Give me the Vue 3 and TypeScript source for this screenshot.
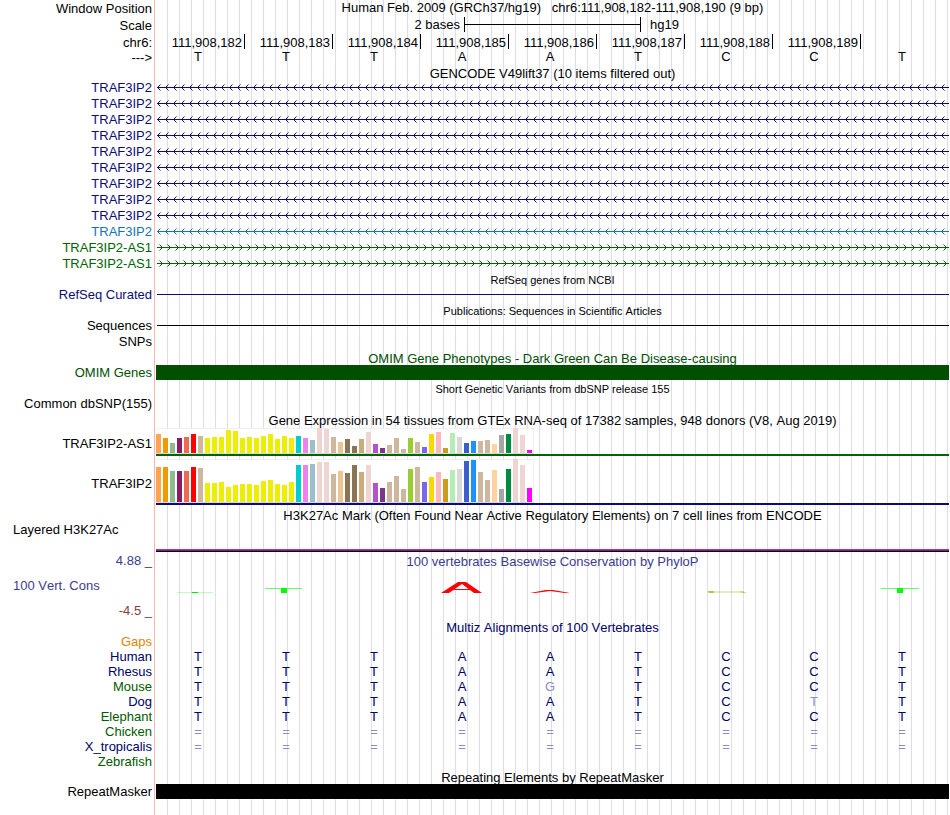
<script setup lang="ts">
type Tone = 'navy' | 'blue' | 'green'

interface GeneRow {
  name: string
  tone: Tone
  strand: '-' | '+'
}

interface Species {
  name: string
  tone: 'species-navy' | 'species-green'
  bases: string
  faded?: number
}

const heading = ['Human Feb. 2009 (GRCh37/hg19)', 'chr6:111,908,182-111,908,190 (9 bp)'].join('   ')

const positions: string[] = [
  '111,908,182', '111,908,183', '111,908,184', '111,908,185',
  '111,908,186', '111,908,187', '111,908,188', '111,908,189', '',
]
const sequence: string[] = 'TTTAATCCT'.split('')

const genes: GeneRow[] = [
  ...Array.from({ length: 9 }, (): GeneRow => ({ name: 'TRAF3IP2', tone: 'navy', strand: '-' })),
  { name: 'TRAF3IP2', tone: 'blue', strand: '-' },
  { name: 'TRAF3IP2-AS1', tone: 'green', strand: '+' },
  { name: 'TRAF3IP2-AS1', tone: 'green', strand: '+' },
]

const tissueColors: string[] = [
  '#ffa54f', '#ee9a00', '#8fbc8f', '#8b1c62', '#ee6a50', '#ff0000', '#cdb79e',
  ...Array.from({ length: 13 }, () => '#eeee00'),
  '#00cdcd', '#ee82ee', '#9ac0cd', '#eed5d2', '#eed5d2', '#cdb79e', '#eec591',
  '#8b7355', '#8b7355', '#cdaa7d', '#eed5d2', '#b452cd', '#7a378b', '#cdb79e',
  '#cdb79e', '#cdb79e', '#9acd32', '#cdb79e', '#7a67ee', '#ffd700', '#ffb6c1',
  '#cd9b1d', '#b4eeb4', '#d9d9d9', '#3a5fcd', '#1e90ff', '#cdb79e', '#cdb79e',
  '#ffd39b', '#a6a6a6', '#008b45', '#eed5d2', '#eed5d2', '#ff00ff',
]

const expression = [
  {
    name: 'TRAF3IP2-AS1',
    kind: 'antisense',
    levels: [
      19, 15, 10, 15, 16, 19, 17, 15, 16, 16, 23, 22, 15, 16, 15, 17, 19, 14, 17, 15, 17, 15, 13, 25, 24, 16, 11, 14,
      7, 14, 21, 9, 5, 8, 15, 4, 15, 11, 6, 19, 21, 5, 20, 16, 10, 12, 12, 13, 9, 18, 19, 25, 18, 3,
    ],
  },
  {
    name: 'TRAF3IP2',
    kind: 'coding',
    levels: [
      35, 35, 31, 31, 31, 35, 34, 19, 19, 20, 15, 17, 18, 18, 17, 21, 22, 18, 17, 20, 37, 37, 38, 40, 40, 28, 31, 29,
      37, 30, 37, 19, 14, 20, 26, 13, 33, 35, 20, 25, 30, 23, 32, 33, 41, 42, 30, 22, 32, 13, 33, 43, 37, 14,
    ],
  },
]

const species: Species[] = [
  { name: 'Human', tone: 'species-navy', bases: 'TTTAATCCT' },
  { name: 'Rhesus', tone: 'species-navy', bases: 'TTTAATCCT' },
  { name: 'Mouse', tone: 'species-green', bases: 'TTTAGTCCT', faded: 4 },
  { name: 'Dog', tone: 'species-navy', bases: 'TTTAATCTT', faded: 7 },
  { name: 'Elephant', tone: 'species-green', bases: 'TTTAATCCT' },
  { name: 'Chicken', tone: 'species-green', bases: '=========' },
  { name: 'X_tropicalis', tone: 'species-navy', bases: '=========' },
  { name: 'Zebrafish', tone: 'species-green', bases: '         ' },
]
</script>

<template>
  <main class="browser">
    <section>
      <div class="row window-row">
        <span class="label">Window Position</span>
        <h1 class="title">{{ heading }}</h1>
      </div>
      <div class="row scale-row">
        <span class="label">Scale</span>
        <div class="scale">
          <span class="scale-size">2 bases</span>
          <span class="scale-bar"></span>
          <span class="scale-assembly">hg19</span>
        </div>
      </div>
      <div class="row ruler-row">
        <span class="label">chr6:</span>
        <div class="bases">
          <span v-for="(p, i) in positions" :key="i" class="position" :class="{ tick: p }">{{ p }}</span>
        </div>
      </div>
      <div class="row sequence-row">
        <span class="label">---&gt;</span>
        <div class="bases">
          <span v-for="(b, i) in sequence" :key="i" class="base">{{ b }}</span>
        </div>
      </div>
    </section>

    <section>
      <h2 class="track-title low">GENCODE V49lift37 (10 items filtered out)</h2>
      <div v-for="(g, i) in genes" :key="i" class="row" :class="g.tone">
        <span class="label">{{ g.name }}</span>
        <svg class="intron" aria-hidden="true">
          <defs>
            <pattern :id="`strand-${i}`" width="8" height="16" patternUnits="userSpaceOnUse">
              <path v-if="g.strand === '-'" class="chevron" d="M4.5 4.5L1.5 7.5L4.5 10.5" />
              <path v-else class="chevron" d="M3.5 4.5L6.5 7.5L3.5 10.5" />
            </pattern>
          </defs>
          <rect x="1" y="7" width="100%" height="1" fill="currentColor" />
          <rect width="100%" height="16" :fill="`url(#strand-${i})`" />
        </svg>
      </div>
    </section>

    <section>
      <h2 class="track-title small">RefSeq genes from NCBI</h2>
      <div class="row navy">
        <span class="label">RefSeq Curated</span>
        <span class="line"></span>
      </div>
    </section>

    <section>
      <h2 class="track-title small">Publications: Sequences in Scientific Articles</h2>
      <div class="row">
        <span class="label">Sequences</span>
        <span class="line"></span>
      </div>
      <div class="row">
        <span class="label">SNPs</span>
      </div>
    </section>

    <section class="omim">
      <h2 class="track-title">OMIM Gene Phenotypes - Dark Green Can Be Disease-causing</h2>
      <div class="row compact">
        <span class="label">OMIM Genes</span>
        <span class="block"></span>
      </div>
    </section>

    <section>
      <h2 class="track-title small tall">Short Genetic Variants from dbSNP release 155</h2>
      <div class="row">
        <span class="label">Common dbSNP(155)</span>
      </div>
    </section>

    <section>
      <h2 class="track-title tall">Gene Expression in 54 tissues from GTEx RNA-seq of 17382 samples, 948 donors (V8, Aug 2019)</h2>
      <div v-for="e in expression" :key="e.name" class="row expression" :class="e.kind">
        <span class="label">{{ e.name }}</span>
        <div class="gene-model">
          <div class="bars">
            <span
              v-for="(level, i) in e.levels"
              :key="i"
              class="bar"
              :style="{ height: `${level}px`, background: tissueColors[i] }"
            ></span>
          </div>
        </div>
      </div>
    </section>

    <section>
      <h2 class="track-title short">H3K27Ac Mark (Often Found Near Active Regulatory Elements) on 7 cell lines from ENCODE</h2>
      <div class="row histone">
        <span class="label side">Layered H3K27Ac</span>
        <span class="histone-signal"></span>
      </div>
    </section>

    <section class="phylop">
      <div class="row window-row">
        <span class="label">4.88 _</span>
        <h2 class="title phylop-title">100 vertebrates Basewise Conservation by PhyloP</h2>
      </div>
      <div class="row signal">
        <span class="label side">100 Vert. Cons</span>
        <div class="bases">
          <svg viewBox="0 0 88 35">
            <path d="M20 24.5H56" stroke="#00ff00" stroke-opacity=".25" />
            <rect x="35" y="24" width="6" height="1" fill="#00e600" />
          </svg>
          <svg viewBox="0 0 88 35">
            <path d="M20 20.5H57" stroke="#66ff66" />
            <rect x="36" y="20" width="6" height="5" fill="#00ff00" />
          </svg>
          <svg viewBox="0 0 88 35"></svg>
          <svg viewBox="0 0 88 35">
            <path d="M20 25L37 14H45L61 25H53L41 16L28 25Z" fill="#ff0000" />
            <path d="M31 21.5H50" stroke="#ff0000" />
          </svg>
          <svg viewBox="0 0 88 35">
            <path d="M21 25L37 22H44L61 25H56L41 23L26 25Z" fill="#ff0000" />
          </svg>
          <svg viewBox="0 0 88 35"></svg>
          <svg viewBox="0 0 88 35">
            <rect x="23" y="23" width="36" height="2" fill="#b5b533" fill-opacity=".3" />
            <path d="M23 23H29V25H24Z" fill="#b5b533" fill-opacity=".8" />
            <path d="M55 23L62 24.5L57 25Z" fill="#b5b533" fill-opacity=".8" />
          </svg>
          <svg viewBox="0 0 88 35"></svg>
          <svg viewBox="0 0 88 35">
            <path d="M20 20.5H58" stroke="#66ff66" />
            <rect x="36" y="20" width="6" height="5" fill="#00ff00" />
          </svg>
        </div>
      </div>
      <div class="row compact">
        <span class="label minimum">-4.5 _</span>
      </div>
    </section>

    <section class="multiz">
      <h2 class="track-title low">Multiz Alignments of 100 Vertebrates</h2>
      <table class="alignment">
        <tbody>
          <tr>
            <th scope="row" class="gaps">Gaps</th>
            <td v-for="i in 9" :key="i"></td>
          </tr>
          <tr v-for="s in species" :key="s.name">
            <th scope="row" :class="s.tone">{{ s.name }}</th>
            <td v-for="(b, i) in s.bases.split('')" :key="i" :class="{ faded: b === '=' || s.faded === i }">{{ b }}</td>
          </tr>
        </tbody>
      </table>
    </section>

    <section>
      <h2 class="track-title">Repeating Elements by RepeatMasker</h2>
      <div class="row compact">
        <span class="label">RepeatMasker</span>
        <span class="block"></span>
      </div>
    </section>
  </main>
</template>

<style>
body {
  margin: 0;
  background: #fff;
}
</style>

<style scoped>
.browser {
  box-sizing: border-box;
  min-height: 100vh;
  padding-right: 1px;
  color: #000;
  font: 13px/16px "Liberation Sans", Arial, Helvetica, sans-serif;
  font-kerning: none;
  background:
    linear-gradient(#ffb4b4, #ffb4b4) 154px 0 / 1px 100% no-repeat,
    repeating-linear-gradient(to right, transparent 0 11px, #dcdcf8 11px 12px) 156px 0 / 100% 100% no-repeat,
    #fff;
}

.row {
  display: grid;
  grid-template-columns: 152px minmax(0, 1fr);
  column-gap: 4px;
  min-height: 16px;
}

.compact {
  min-height: 15px;
  line-height: 15px;
}

.window-row {
  height: 16px;
  line-height: 18px;
}

.sequence-row {
  height: 15px;
  min-height: 15px;
  line-height: 17px;
}

.label {
  text-align: right;
  white-space: nowrap;
}

.side {
  padding-left: 13px;
  text-align: left;
}

.title,
.track-title {
  margin: 0;
  font-size: 13px;
  font-weight: 400;
  text-align: center;
  white-space: pre;
}

.title {
  line-height: 15px;
  font-kerning: normal;
}

.track-title {
  height: 15px;
  padding-left: 156px;
  line-height: 17px;
}

.track-title.low {
  height: 16px;
  line-height: 19px;
}

.track-title.short {
  height: 14px;
  line-height: 15px;
}

.track-title.tall {
  height: 16px;
}

.track-title.small {
  font-size: 11px;
}

.track-title.small.tall {
  line-height: 19px;
}

.navy { color: #0c0c78; }
.blue { color: #1874b4; }
.green { color: #006400; }
.omim { color: #005000; }

.scale-row {
  height: 17px;
  line-height: 19px;
}

.scale {
  display: grid;
  grid-template-columns: 1fr 177px 1fr;
  line-height: 17px;
}

.scale-size {
  padding-right: 4px;
  text-align: right;
}

.scale-assembly {
  padding-left: 9px;
}

.scale-bar {
  height: 15px;
  margin-top: 1px;
  border: solid #000;
  border-width: 0 1px;
  box-sizing: border-box;
  background: linear-gradient(#000, #000) 0 7px / 100% 1px no-repeat;
}

.ruler-row {
  line-height: 19px;
}

.ruler-row,
.ruler-row .bases {
  height: 16px;
}

.bases {
  display: grid;
  grid-template-columns: repeat(9, minmax(0, 1fr));
  padding-left: 1px;
}

.position {
  box-sizing: border-box;
  height: 15px;
  margin-top: 1px;
  padding-right: 2px;
  line-height: 17px;
  text-align: right;
  font-kerning: normal;
}

.position.tick {
  border-right: 1px solid #000;
}

.base {
  padding-right: 6px;
  line-height: 15px;
  text-align: center;
}

.intron {
  display: block;
  width: 100%;
  height: 16px;
}

.chevron {
  fill: none;
  stroke: currentColor;
  stroke-width: 1;
}

.line {
  height: 1px;
  margin: 7px 0 0 1px;
  background: currentColor;
}

.block {
  background: currentColor;
}

.expression {
  align-items: center;
}

.gene-model {
  margin-bottom: 3px;
  border-bottom: 2px solid;
}

.antisense .gene-model { border-color: #006400; }
.coding .gene-model { border-color: #0c0c78; }

.bars {
  display: flex;
  align-items: flex-end;
  gap: 2px;
  box-sizing: border-box;
  width: max-content;
  height: 26px;
  padding-right: 1px;
  border-right: 1px solid #f0f0f0;
  border-bottom: 1px solid #d8d8d8;
  background: linear-gradient(#f0f0f0, #f0f0f0) 0 0 / 100% 1px no-repeat, #fff;
}

.coding .bars {
  height: 44px;
}

.bar {
  width: 5px;
}

.histone {
  min-height: 30px;
}

.histone-signal {
  align-self: end;
  height: 3px;
  background: linear-gradient(#a03ca0 0 1px, #6e2870 1px 2px, #140014 2px 3px);
}

.phylop {
  color: #3c3c8c;
}

.phylop-title {
  height: 16px;
  line-height: 19px;
  font-kerning: none;
}

.signal {
  align-items: center;
}

.signal svg {
  display: block;
  width: 88px;
  height: 35px;
}

.minimum {
  color: #8c3c3c;
}

.multiz {
  color: #000064;
}

.alignment {
  width: 100%;
  table-layout: fixed;
  border-collapse: collapse;
  line-height: 15px;
}

.alignment th {
  width: 152px;
  padding: 0 5px 0 0;
  font-weight: 400;
  text-align: right;
}

.alignment td {
  height: 15px;
  padding: 0 6px 0 0;
  text-align: center;
}

.alignment .faded { color: #8c8cbe; }
.alignment .gaps { color: #e68200; }
.species-navy { color: #000064; }
.species-green { color: #005a00; }
</style>
